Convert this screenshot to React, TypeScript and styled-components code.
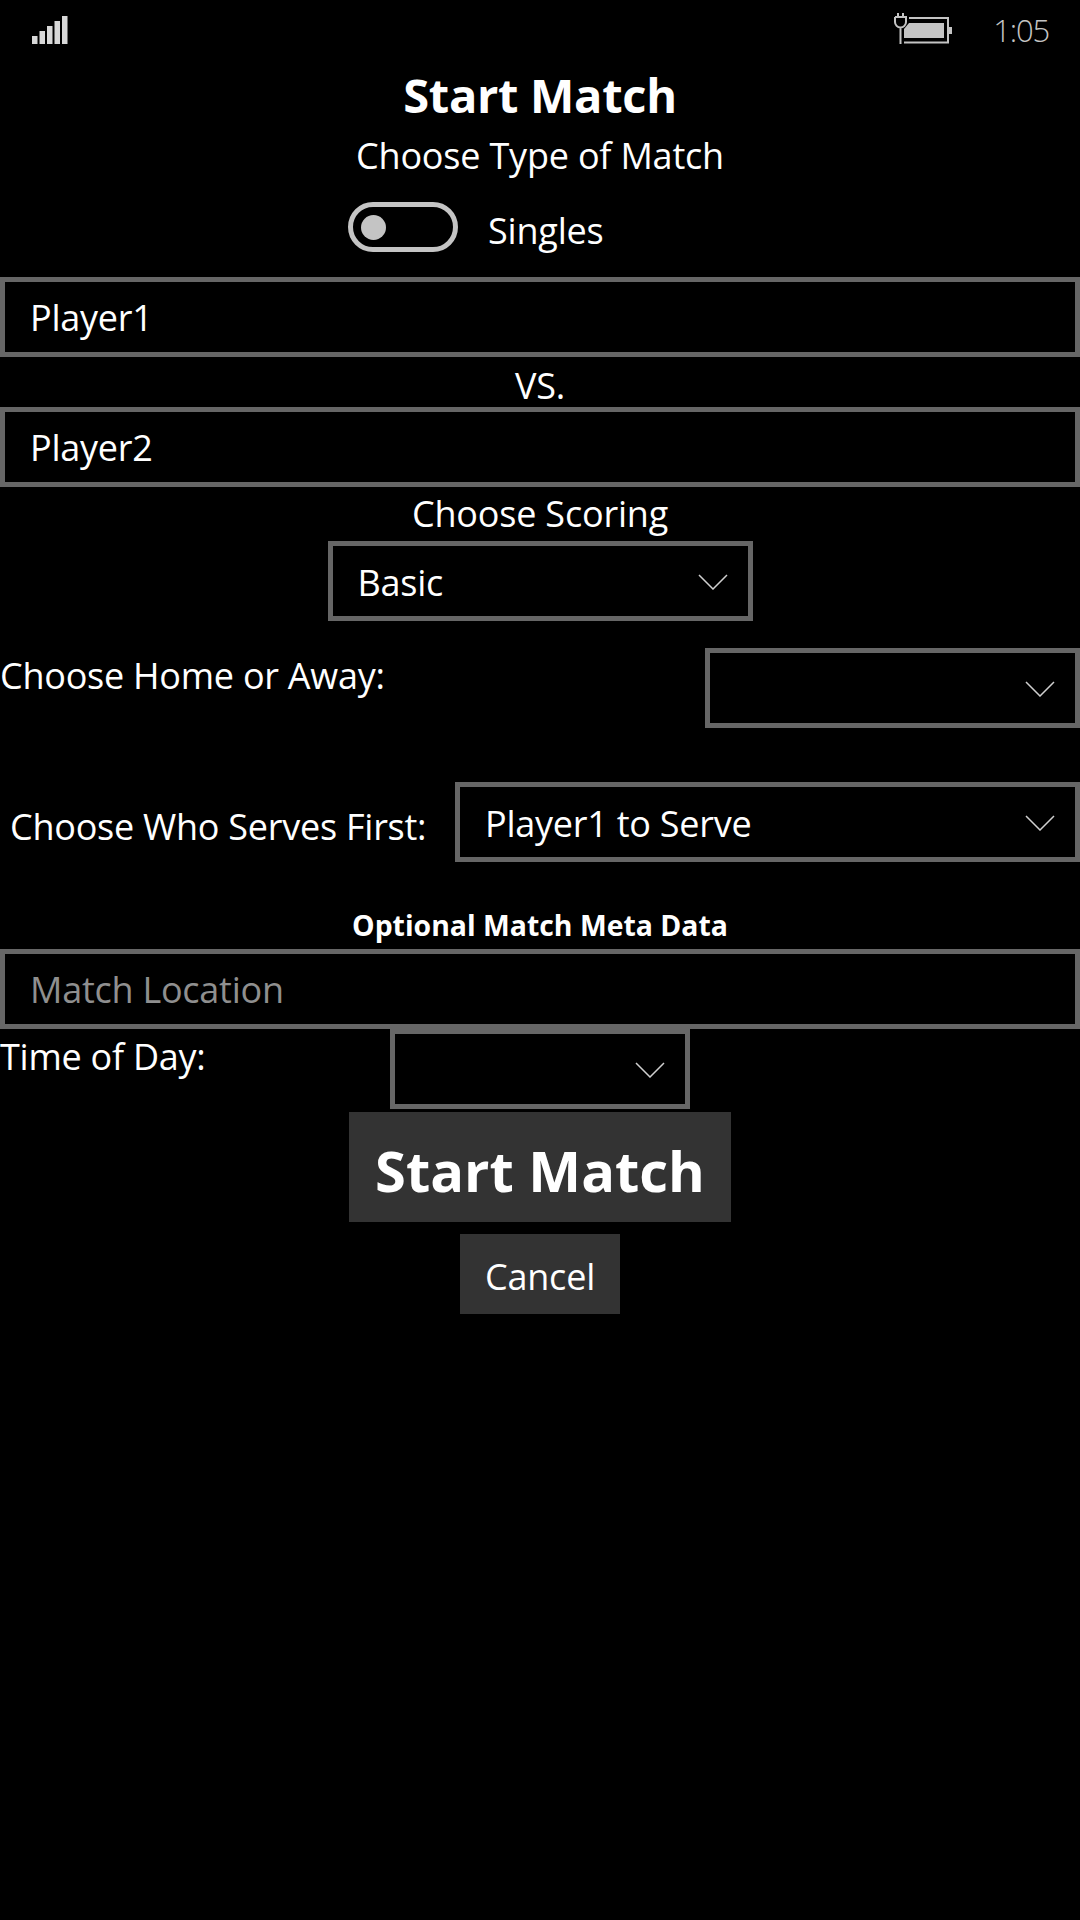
import React from 'react';
import styled, { createGlobalStyle } from 'styled-components';

const GlobalStyle = createGlobalStyle`
  html, body {
    margin: 0;
    padding: 0;
    background: #000;
  }
  body {
    font-family: "Open Sans", "Noto Sans", sans-serif;
    color: #fff;
  }
`;

const Page = styled.div`
  width: 1080px;
  height: 1920px;
  background: #000;
  overflow: hidden;
  display: flex;
  flex-direction: column;
`;

const StatusBar = styled.div`
  height: 60px;
  display: flex;
  align-items: center;
  justify-content: space-between;
  padding: 0 31px 0 32px;
  color: #c4c4c4;
`;

const StatusRight = styled.div`
  display: flex;
  align-items: center;
  gap: 41px;
`;

const BatterySvg = styled.svg`
  margin-top: -3px;
`;

const Clock = styled.span`
  font-size: 31px;
  font-weight: 300;
  letter-spacing: -1.2px;
`;

const Title = styled.div`
  height: 70px;
  line-height: 70px;
  text-align: center;
  font-size: 47px;
  font-weight: 700;
  letter-spacing: -0.3px;
`;

const CenterLabel = styled.div<{ $height: number; $nudge?: number }>`
  height: ${({ $height }) => $height}px;
  line-height: ${({ $height }) => $height}px;
  padding-top: ${({ $nudge }) => $nudge ?? 0}px;
  margin-bottom: ${({ $nudge }) => -($nudge ?? 0)}px;
  text-align: center;
  font-size: 36px;
  font-weight: 400;
  letter-spacing: -0.2px;
`;

const ToggleRow = styled.div`
  height: 97px;
  display: flex;
  gap: 30px;
  padding: 22px 0 0 348px;
  box-sizing: border-box;
`;

const ToggleTrack = styled.div`
  width: 110px;
  height: 50px;
  box-sizing: border-box;
  border: 5px solid #c4c4c4;
  border-radius: 25px;
  display: flex;
  align-items: center;
  padding-left: 8px;
`;

const ToggleKnob = styled.div`
  width: 25px;
  height: 25px;
  border-radius: 50%;
  background: #c4c4c4;
`;

const ToggleLabel = styled.span`
  font-size: 36px;
  line-height: 50px;
  padding-top: 4px;
  font-weight: 400;
  letter-spacing: -0.2px;
`;

const TextBox = styled.div<{ $placeholder?: boolean }>`
  height: 80px;
  box-sizing: border-box;
  border: 5px solid #666;
  padding: 0 25px;
  display: flex;
  align-items: center;
  font-size: 36px;
  font-weight: 400;
  letter-spacing: -0.25px;
  color: ${({ $placeholder }) => ($placeholder ? '#8f8f8f' : '#fff')};
`;

const SelectBox = styled.div<{ $width: number }>`
  width: ${({ $width }) => $width}px;
  height: 80px;
  flex: none;
  box-sizing: border-box;
  border: 5px solid #666;
  padding: 2px 25px 0;
  display: flex;
  align-items: center;
  justify-content: space-between;
  font-size: 36px;
  font-weight: 400;
  letter-spacing: -0.25px;
`;

const Chevron = styled.svg`
  width: 30px;
  height: 16px;
  flex: none;
  margin-left: auto;
  margin-right: -5px;
`;

const CenterRow = styled.div`
  display: flex;
  justify-content: center;
`;

const HomeRow = styled.div`
  display: flex;
  justify-content: space-between;
  margin-top: 27px;
  height: 134px;
`;

const ServeRow = styled.div`
  display: flex;
  justify-content: space-between;
  height: 80px;
`;

const RowLabel = styled.div<{ $left?: number; $top: number }>`
  padding-left: ${({ $left }) => $left ?? 0}px;
  padding-top: ${({ $top }) => $top}px;
  font-size: 36px;
  line-height: 48px;
  font-weight: 400;
  letter-spacing: -0.25px;
  white-space: nowrap;
`;

const MetaHeading = styled.div`
  height: 87px;
  line-height: 126px;
  text-align: center;
  font-size: 28.4px;
  font-weight: 700;
`;

const TimeRow = styled.div`
  display: flex;
  height: 80px;
`;

const TimeSlot = styled.div`
  margin-left: 390px;
  position: absolute;
`;

const Buttons = styled.div`
  display: flex;
  flex-direction: column;
  align-items: center;
  gap: 12px;
  margin-top: 3px;
`;

const Button = styled.div<{ $big?: boolean }>`
  display: flex;
  align-items: center;
  justify-content: center;
  background: #333;
  box-sizing: border-box;
  width: ${({ $big }) => ($big ? 382 : 160)}px;
  height: ${({ $big }) => ($big ? 110 : 80)}px;
  padding-top: ${({ $big }) => ($big ? 6 : 5)}px;
  font-size: ${({ $big }) => ($big ? 56 : 36)}px;
  font-weight: ${({ $big }) => ($big ? 700 : 400)};
  letter-spacing: ${({ $big }) => ($big ? 0 : -0.2)}px;
`;

const DownArrow = () => (
  <Chevron viewBox="0 0 30 16">
    <path d="M1 1 L15 15 L29 1" fill="none" stroke="#d0d0d0" strokeWidth="1.5" />
  </Chevron>
);

const SignalIcon = () => (
  <svg width="37" height="30" viewBox="0 0 37 30">
    <rect x="0" y="21" width="5.5" height="8" fill="#d8d8d8" />
    <rect x="7.5" y="16" width="5.5" height="13" fill="#d8d8d8" />
    <rect x="15" y="11" width="5.5" height="18" fill="#d8d8d8" />
    <rect x="22.5" y="6" width="5.5" height="23" fill="#d8d8d8" />
    <rect x="30" y="1" width="5.5" height="28" fill="#d8d8d8" />
  </svg>
);

const BatteryIcon = () => (
  <BatterySvg width="58" height="31" viewBox="0 0 58 31">
    <path d="M1 4 V9 A5.5 5.5 0 0 0 12 9 V4 H1 M4 4 V0 M9 4 V0 M6.5 14 V31" fill="none" stroke="#c4c4c4" strokeWidth="2" />
    <path d="M15 5 H54 V29.5 H10" fill="none" stroke="#c4c4c4" strokeWidth="2" />
    <path d="M15 10 H50 V25 H10 V16 Z" fill="#c4c4c4" />
    <rect x="55" y="14" width="3" height="7" fill="#c4c4c4" />
  </BatterySvg>
);

export default function App() {
  return (
    <Page>
      <GlobalStyle />
      <StatusBar>
        <SignalIcon />
        <StatusRight>
          <BatteryIcon />
          <Clock>1:05</Clock>
        </StatusRight>
      </StatusBar>
      <Title>Start Match</Title>
      <CenterLabel $height={50} $nudge={1}>Choose Type of Match</CenterLabel>
      <ToggleRow>
        <ToggleTrack>
          <ToggleKnob />
        </ToggleTrack>
        <ToggleLabel>Singles</ToggleLabel>
      </ToggleRow>
      <TextBox>Player1</TextBox>
      <CenterLabel $height={50} $nudge={4}>VS.</CenterLabel>
      <TextBox>Player2</TextBox>
      <CenterLabel $height={54}>Choose Scoring</CenterLabel>
      <CenterRow>
        <SelectBox $width={425}>
          Basic
          <DownArrow />
        </SelectBox>
      </CenterRow>
      <HomeRow>
        <RowLabel $top={4}>Choose Home or Away:</RowLabel>
        <SelectBox $width={375}>
          <DownArrow />
        </SelectBox>
      </HomeRow>
      <ServeRow>
        <RowLabel $left={10} $top={21}>Choose Who Serves First:</RowLabel>
        <SelectBox $width={625}>
          Player1 to Serve
          <DownArrow />
        </SelectBox>
      </ServeRow>
      <MetaHeading>Optional Match Meta Data</MetaHeading>
      <TextBox $placeholder>Match Location</TextBox>
      <TimeRow>
        <RowLabel $top={4}>Time of Day:</RowLabel>
        <TimeSlot>
          <SelectBox $width={300}>
            <DownArrow />
          </SelectBox>
        </TimeSlot>
      </TimeRow>
      <Buttons>
        <Button $big>Start Match</Button>
        <Button>Cancel</Button>
      </Buttons>
    </Page>
  );
}
